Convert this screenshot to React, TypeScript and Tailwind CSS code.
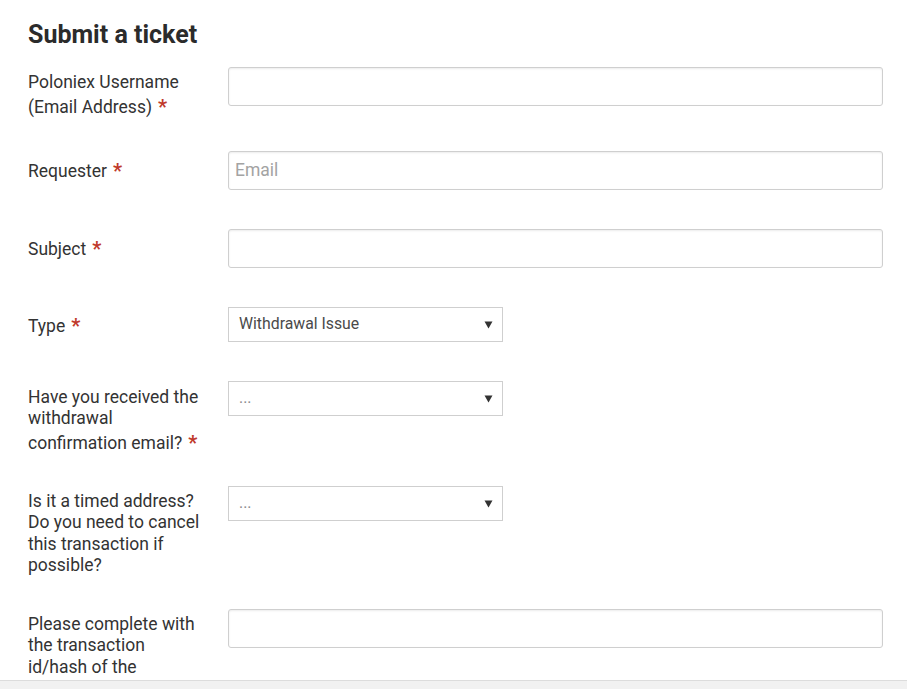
import React from 'react';

const Req = () => (
  <span className="ml-[6px] align-[-1px] text-[20px] font-bold leading-[26px] text-[#c0392b]">*</span>
);

const TextField = ({ placeholder }: { placeholder?: string }) => (
  <input
    type="text"
    placeholder={placeholder}
    className="h-[39px] w-full rounded-[3px] border border-[#cfcfcf] bg-white px-[6px] text-[17.5px] text-[#333] shadow-[inset_0_1px_2px_rgba(0,0,0,0.08)] outline-none placeholder:text-[#a3a3a3]"
  />
);

const SelectField = ({ value }: { value: string }) => (
  <div className="flex h-[35px] w-[275px] items-center justify-between border border-[#cfcfcf] bg-white pl-[10px] pr-[9px] text-[15.8px] text-[#4a4a4a]">
    <span className={value === '...' ? 'text-[#8a8a8a]' : ''}>{value}</span>
    <svg width="9" height="8" viewBox="0 0 9 8" className="mt-[1px]">
      <path d="M0.5 0.5 L8.5 0.5 L4.5 7.5 Z" fill="#333" />
    </svg>
  </div>
);

type RowProps = {
  label: React.ReactNode;
  field: React.ReactNode;
  labelPad: string;
  gap: string;
};

const Row = ({ label, field, labelPad, gap }: RowProps) => (
  <div className={`flex items-start ${gap}`}>
    <label className={`w-[200px] shrink-0 pr-[28px] text-[17.5px] leading-[21.5px] text-[#333] ${labelPad}`}>
      {label}
    </label>
    <div className="flex-1">{field}</div>
  </div>
);

export default function App() {
  return (
    <div
      className="flex h-screen flex-col bg-white"
      style={{ fontFamily: 'Roboto, "Liberation Sans", sans-serif' }}
    >
      <div className="flex-1 overflow-hidden pl-[28px] pr-[24px] pt-[19px]">
        <h1 className="mb-[16px] text-[25px] font-bold leading-[32px] text-[#2b2b2b]">
          Submit a ticket
        </h1>

        <Row
          labelPad="pt-[5px]"
          gap="mb-[31px]"
          label={<>Poloniex Username (Email Address)<Req /></>}
          field={<TextField />}
        />
        <Row
          labelPad="pt-[7px]"
          gap="mb-[39px]"
          label={<>Requester<Req /></>}
          field={<TextField placeholder="Email" />}
        />
        <Row
          labelPad="pt-[7px]"
          gap="mb-[39px]"
          label={<>Subject<Req /></>}
          field={<TextField />}
        />
        <Row
          labelPad="pt-[6px]"
          gap="mb-[39px]"
          label={<>Type<Req /></>}
          field={<SelectField value="Withdrawal Issue" />}
        />
        <Row
          labelPad="pt-[6px]"
          gap="mb-[30px]"
          label={<>Have you received the withdrawal confirmation email?<Req /></>}
          field={<SelectField value="..." />}
        />
        <Row
          labelPad="pt-[5px]"
          gap="mb-[32px]"
          label="Is it a timed address? Do you need to cancel this transaction if possible?"
          field={<SelectField value="..." />}
        />
        <Row
          labelPad="pt-[5px]"
          gap="mb-[20px]"
          label="Please complete with the transaction id/hash of the withdrawal"
          field={<TextField />}
        />
      </div>
      <div className="h-[9px] shrink-0 border-t border-[#dcdcdc] bg-[#f1f1f1]" />
    </div>
  );
}
